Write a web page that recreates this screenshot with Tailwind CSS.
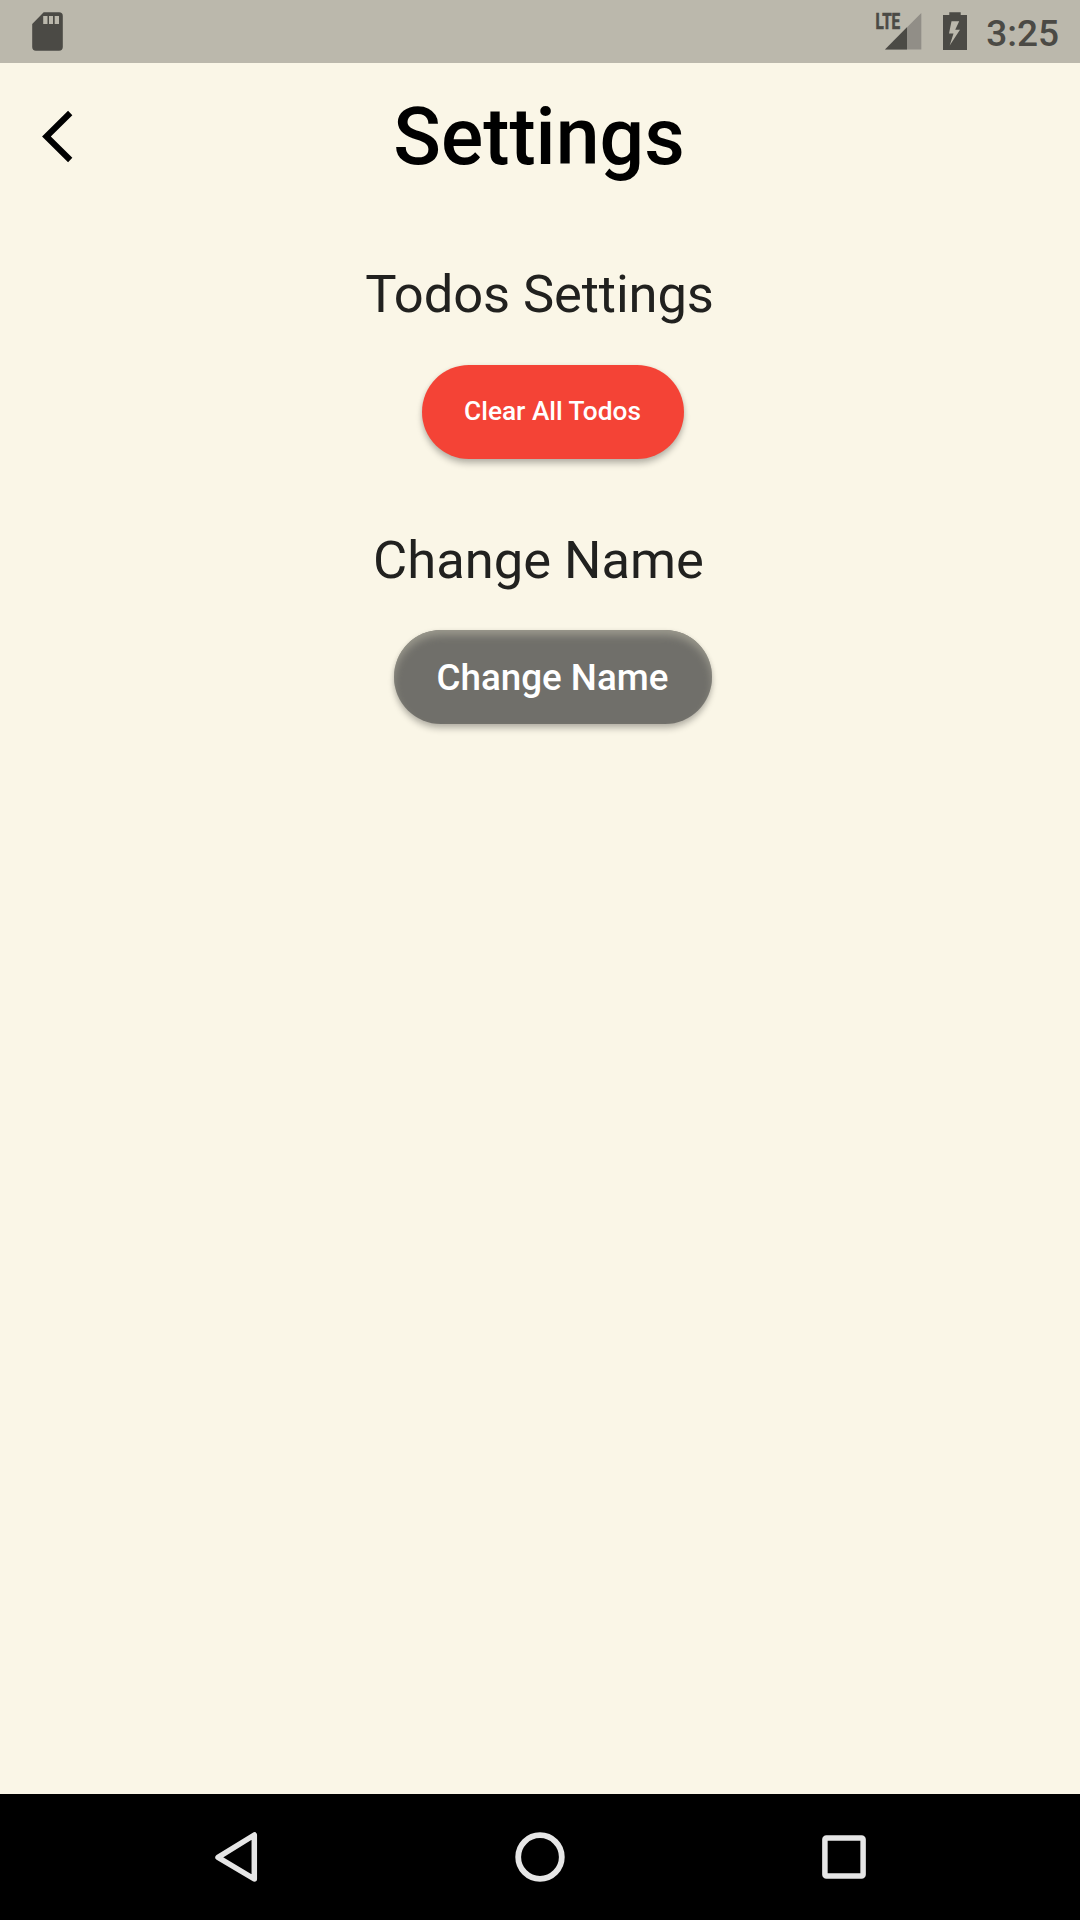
<!DOCTYPE html>
<html lang="en">
<head>
<meta charset="utf-8">
<title>Settings</title>
<script src="https://cdn.jsdelivr.net/npm/@tailwindcss/browser@4"></script>
</head>
<body class="flex h-[1920px] w-[1080px] flex-col overflow-hidden bg-[#faf6e7] font-[Roboto,sans-serif]">
  <div class="flex h-[63px] shrink-0 items-center justify-between bg-[#bbb8ac] text-[#4b4a45]">
    <svg class="h-[63px] w-20" viewBox="0 0 80 63" fill="currentColor">
      <path fill-rule="evenodd" d="M43.7 12.3H59Q62.8 12.3 62.8 16V47Q62.8 50.7 59 50.7H36Q32.2 50.7 32.2 47V24ZM43.2 16V24H47.5V16ZM49 16V24H53V16ZM54.7 16V24H59V16Z"/>
    </svg>
    <div class="flex h-full items-center pr-[21px]">
      <svg class="mr-px h-[63px] w-[126px]" viewBox="860 0 126 63" fill="currentColor">
        <path d="M921.3 13V49.5H885Z" fill="#918e87"/>
        <path d="M907 27.3V49.5H885Z"/>
        <text x="875.6" y="29" font-size="21.5" font-weight="700" textLength="24.5" lengthAdjust="spacingAndGlyphs" stroke="currentColor" stroke-width="0.7">LTE</text>
        <path fill-rule="evenodd" d="M949.3 12.3H960.7V15H967V50H943V15H949.3ZM951.5 21.3L949 33.5H953.5L949.7 45.5L960 29.7H955.2L959.2 21.3Z"/>
      </svg>
      <span class="-ml-px pt-[3px] text-[37px] leading-[37px] font-medium">3:25</span>
    </div>
  </div>

  <header class="grid h-[147px] shrink-0 grid-cols-[147px_1fr_147px] items-center">
    <svg class="h-[147px] w-[147px]" viewBox="0 63 147 147" fill="none" stroke="#000" stroke-width="6.1">
      <path d="M70.2 113L46.4 136.5L70.2 160"/>
    </svg>
    <h1 class="pr-[2px] text-center text-[78.75px] leading-[92px] font-medium text-black">Settings</h1>
  </header>

  <main class="flex grow flex-col items-center">
    <h2 class="mt-[53px] pr-px text-[52.5px] leading-[62px] tracking-[-0.1px] text-[#21211f]">Todos Settings</h2>
    <button class="mt-10 ml-[26px] h-[94px] w-[262px] rounded-full bg-[#f44336] pr-px text-[26.25px] font-medium text-white shadow-[0_5px_6px_rgba(0,0,0,0.22),0_1px_5px_rgba(0,0,0,0.10)]">Clear All Todos</button>
    <h2 class="mt-[70px] pr-[3px] text-[52.5px] leading-[62px] text-[#21211f]">Change Name</h2>
    <button class="mt-[39px] ml-[26px] h-[94px] w-[318px] rounded-full bg-[#706f6a] pt-px pr-px text-[36.75px] font-medium text-white shadow-[inset_0_6px_8px_-1px_#9c9a8e,0_5px_6px_rgba(0,0,0,0.22),0_1px_5px_rgba(0,0,0,0.10)]">Change Name</button>
  </main>

  <nav class="h-[126px] shrink-0 bg-black">
    <svg class="h-[126px] w-[1080px]" viewBox="0 1794 1080 126" fill="none" stroke="#e6e6e6" stroke-linejoin="round">
      <path d="M218 1857.3L254.3 1835V1879Z" stroke-width="5.5"/>
      <circle cx="540" cy="1857" r="21.8" stroke-width="5.8"/>
      <rect x="824.9" y="1837.9" width="38.2" height="38.2" rx="1.5" stroke-width="5.5"/>
    </svg>
  </nav>
</body>
</html>
